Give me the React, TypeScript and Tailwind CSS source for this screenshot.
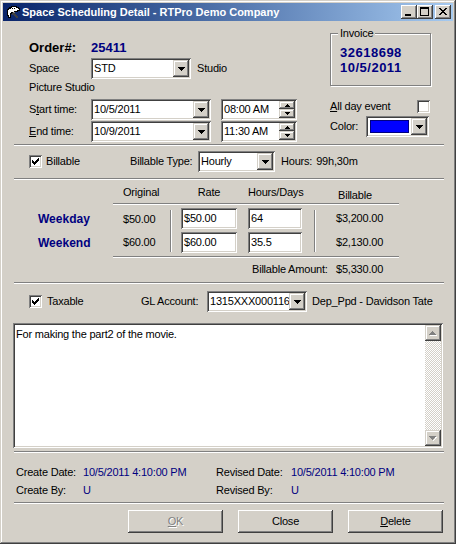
import React from 'react';

// classic win2k bevels
const sunken =
  'shadow-[inset_1px_1px_#808080,inset_-1px_-1px_#ffffff,inset_2px_2px_#404040,inset_-2px_-2px_#d4d0c8]';
const raised =
  'shadow-[inset_-1px_-1px_#404040,inset_1px_1px_#ffffff,inset_-2px_-2px_#808080,inset_2px_2px_#d4d0c8]';
const raisedSmall =
  'shadow-[inset_-1px_-1px_#404040,inset_1px_1px_#d4d0c8,inset_-2px_-2px_#808080,inset_2px_2px_#ffffff]';

const DownArrow = ({ color = '#000' }: { color?: string }) => (
  <svg width="7" height="4" viewBox="0 0 7 4" shapeRendering="crispEdges">
    <path d="M0 0h7v1H0zM1 1h5v1H1zM2 2h3v1H2zM3 3h1v1H3z" fill={color} />
  </svg>
);

const SmallArrow = ({ up }: { up?: boolean }) => (
  <svg width="5" height="3" viewBox="0 0 5 3" shapeRendering="crispEdges">
    <path d={up ? 'M2 0h1v1H2zM1 1h3v1H1zM0 2h5v1H0z' : 'M0 0h5v1H0zM1 1h3v1H1zM2 2h1v1H2z'} fill="#000" />
  </svg>
);

const DropButton = () => (
  <div className={`w-[16px] h-[17px] shrink-0 flex items-center justify-center bg-[#d4d0c8] ${raisedSmall}`}>
    <DownArrow />
  </div>
);

const Combo = ({ width, children }: { width: string; children: React.ReactNode }) => (
  <div className={`flex h-[21px] p-[2px] bg-white shrink-0 ${sunken} ${width}`}>
    <div className="flex-1 pl-[1px] leading-[17px] whitespace-nowrap overflow-hidden">{children}</div>
    <DropButton />
  </div>
);

const Spinner = ({ value }: { value: string }) => (
  <div className={`flex h-[21px] w-[76px] p-[2px] bg-white ${sunken}`}>
    <div className="flex-1 pl-[1px] leading-[17px] whitespace-nowrap">{value}</div>
    <div className="flex flex-col w-[16px]">
      <div className={`h-[8px] flex items-center justify-center bg-[#d4d0c8] ${raisedSmall}`}>
        <SmallArrow up />
      </div>
      <div className={`h-[9px] flex items-center justify-center bg-[#d4d0c8] ${raisedSmall}`}>
        <SmallArrow />
      </div>
    </div>
  </div>
);

const TextBox = ({ width, children }: { width: string; children: React.ReactNode }) => (
  <div className={`h-[21px] p-[2px] pl-[3px] bg-white leading-[17px] ${sunken} ${width}`}>{children}</div>
);

const Checkbox = ({ checked }: { checked?: boolean }) => (
  <div className={`w-[13px] h-[13px] shrink-0 bg-white flex items-center justify-center ${sunken}`}>
    {checked && (
      <svg width="7" height="7" viewBox="0 0 7 7" shapeRendering="crispEdges">
        <path
          d="M0 2h1v3H0zM1 3h1v3H1zM2 4h1v3H2zM3 3h1v3H3zM4 2h1v3H4zM5 1h1v3H5zM6 0h1v3H6z"
          fill="#000"
        />
      </svg>
    )}
  </div>
);

const HLine = ({ className }: { className: string }) => (
  <div className={`h-[2px] border-t border-t-[#808080] border-b border-b-white ${className}`} />
);

const VLine = () => <div className="w-[2px] border-l border-l-[#808080] border-r border-r-white" />;

const ScrollBtn = ({ up }: { up?: boolean }) => (
  <div className={`h-[16px] w-[16px] flex items-center justify-center bg-[#d4d0c8] ${raisedSmall}`}>
    <svg width="8" height="5" viewBox="0 0 8 5" shapeRendering="crispEdges">
      {up ? (
        <>
          <path d="M4 1h1v1H4zM5 2h1v1H5zM6 3h1v1H6zM1 4h7v1H1z" fill="#fff" />
          <path d="M3 0h1v1H3zM2 1h3v1H2zM1 2h5v1H1zM0 3h7v1H0z" fill="#808080" />
        </>
      ) : (
        <>
          <path d="M1 1h7v1H1zM6 2h1v1H6zM5 3h1v1H5zM4 4h1v1H4z" fill="#fff" />
          <path d="M0 0h7v1H0zM1 1h5v1H1zM2 2h3v1H2zM3 3h1v1H3z" fill="#808080" />
        </>
      )}
    </svg>
  </div>
);

const TitleButton = ({ kind }: { kind: 'min' | 'max' | 'close' }) => (
  <div className={`w-[16px] h-[14px] bg-[#d4d0c8] flex ${raised}`}>
    <svg width="16" height="14" viewBox="0 0 16 14" shapeRendering="crispEdges">
      {kind === 'min' && <path d="M4 9h6v2H4z" fill="#000" />}
      {kind === 'max' && <path d="M3 2h9v9H3zM4 4v6h7V4z" fill="#000" fillRule="evenodd" />}
      {kind === 'close' && (
        <path
          d="M4 3h2v1H4zM10 3h2v1h-2zM5 4h2v1H5zM9 4h2v1H9zM6 5h4v1H6zM7 6h2v1H7zM6 7h4v1H6zM5 8h2v1H5zM9 8h2v1H9zM4 9h2v1H4zM10 9h2v1h-2z"
          fill="#000"
        />
      )}
    </svg>
  </div>
);

const AppIcon = () => (
  <svg width="16" height="16" viewBox="0 0 16 16" shapeRendering="crispEdges">
    <path d="M2 5h1V4h1V3h2V2h5v1h2v1h1v2h-2v1H9v1H6v1H5v4H3v-2H2z" fill="#fff" stroke="#000" strokeWidth="1" />
    <path d="M5 4h1v1H5zM7 4h1v1H7zM9 4h1v1H9z" fill="#000" />
    <path d="M7 9h3v1h1v1h1v1h1v2h-2v-1h-1v-1H9v-1H7z" fill="#404040" />
    <path d="M8 8h2v1H8z" fill="#808080" />
  </svg>
);

export default function App() {
  return (
    <div
      className={`w-[456px] h-[544px] bg-[#d4d0c8] p-[3px] flex flex-col text-[11px] text-black tracking-[-0.2px] font-['Liberation_Sans',Arial,sans-serif] shadow-[inset_-1px_-1px_#404040,inset_1px_1px_#d4d0c8,inset_-2px_-2px_#808080,inset_2px_2px_#ffffff]`}
    >
      {/* title bar */}
      <div className="h-[18px] shrink-0 flex items-center pl-[2px] pr-[2px] bg-linear-to-r from-[#0a246a] to-[#a6caf0]">
        <AppIcon />
        <span className="ml-[1px] text-white font-bold text-[11px] tracking-normal whitespace-nowrap">
          Space Scheduling Detail - RTPro Demo Company
        </span>
        <div className="ml-auto flex">
          <TitleButton kind="min" />
          <TitleButton kind="max" />
          <div className="ml-[2px]">
            <TitleButton kind="close" />
          </div>
        </div>
      </div>

      {/* client */}
      <div className="flex-1 flex flex-col">
        <div className="flex">
          <div className="pl-[26px] pt-[19px] w-[327px] flex flex-col">
            <div className="flex h-[16px] items-center font-bold text-[13px] tracking-normal">
              <span className="w-[62px]">Order#:</span>
              <span className="text-[#000080]">25411</span>
            </div>
            <div className="flex items-center mt-[2px]">
              <span className="w-[62px]">Space</span>
              <Combo width="w-[100px]">STD</Combo>
              <span className="ml-[6px]">Studio</span>
            </div>
            <div className="h-[17px] flex items-center">Picture Studio</div>
            <div className="flex items-center mt-[3px]">
              <span className="w-[62px]">
                S<span className="underline">t</span>art time:
              </span>
              <Combo width="w-[120px]">10/5/2011</Combo>
              <div className="ml-[10px]">
                <Spinner value="08:00 AM" />
              </div>
            </div>
            <div className="flex items-center mt-[1px]">
              <span className="w-[62px]">
                <span className="underline">E</span>nd time:
              </span>
              <Combo width="w-[120px]">10/9/2011</Combo>
              <div className="ml-[10px]">
                <Spinner value="11:30 AM" />
              </div>
            </div>
          </div>

          <div className="pt-[12px] w-[101px] flex flex-col">
            <div className="relative h-[53px] border border-[#808080] shadow-[inset_1px_1px_#ffffff,1px_1px_#ffffff] pl-[9px] pt-[11px] font-bold text-[13px] text-[#000080] tracking-[0.5px] leading-[15px]">
              <span className="absolute -top-[8px] left-[7px] px-[2px] bg-[#d4d0c8] text-black font-normal text-[11px] tracking-[-0.2px] leading-[14px]">
                Invoice
              </span>
              <div>32618698</div>
              <div>10/5/2011</div>
            </div>
            <div className="mt-[14px] h-[13px] w-[100px] flex items-center justify-between">
              <span>
                <span className="underline">A</span>ll day event
              </span>
              <Checkbox />
            </div>
            <div className="mt-[3px] flex items-center">
              <span className="w-[36px]">Color:</span>
              <div className={`flex h-[21px] w-[63px] p-[2px] bg-white ${sunken}`}>
                <div className="flex-1 flex items-center pl-[2px] pr-[2px]">
                  <div className="h-[13px] w-full bg-[#0000ff] border border-[#000080]" />
                </div>
                <DropButton />
              </div>
            </div>
          </div>
        </div>

        <HLine className="ml-[11px] w-[430px] mt-[2px]" />

        {/* billable */}
        <div className="flex items-center h-[21px] mt-[5px] pl-[26px]">
          <div className="w-[101px] flex items-center">
            <Checkbox checked />
            <span className="ml-[4px]">Billable</span>
          </div>
          <span className="w-[68px]">Billable Type:</span>
          <Combo width="w-[77px]">Hourly</Combo>
          <span className="ml-[6px]">Hours:</span>
          <span className="ml-[4px]">99h,30m</span>
        </div>

        <HLine className="ml-[11px] w-[430px] mt-[6px]" />

        {/* rate table */}
        <div className="flex items-start h-[14px] ml-[35px] mt-[5px] leading-[14px]">
          <div className="w-[85px]" />
          <div className="w-[47px]">Original</div>
          <div className="w-[11px]" />
          <div className="w-[56px] text-center">Rate</div>
          <div className="w-[11px]" />
          <div className="w-[54px] text-center whitespace-nowrap">Hours/Days</div>
          <div className="w-[36px]" />
          <div className="mt-[3px]">Billable</div>
        </div>
        <HLine className="ml-[110px] w-[286px] mt-[4px]" />
        <div className="flex ml-[35px] mt-[3px]">
          <div className="w-[85px] flex flex-col gap-[3px] font-bold text-[12px] text-[#000080] tracking-normal">
            <div className="h-[21px] flex items-center">Weekday</div>
            <div className="h-[21px] flex items-center">Weekend</div>
          </div>
          <div className="w-[47px] flex flex-col gap-[3px]">
            <div className="h-[21px] flex items-center pt-[2px]">$50.00</div>
            <div className="h-[21px] flex items-center">$60.00</div>
          </div>
          <div className="w-[11px] flex pt-[2px] pb-[1px]">
            <VLine />
          </div>
          <div className="flex flex-col gap-[3px]">
            <TextBox width="w-[56px]">$50.00</TextBox>
            <TextBox width="w-[56px]">$60.00</TextBox>
          </div>
          <div className="w-[11px]" />
          <div className="flex flex-col gap-[3px]">
            <TextBox width="w-[54px]">64</TextBox>
            <TextBox width="w-[54px]">35.5</TextBox>
          </div>
          <div className="w-[34px] flex pl-[12px] pt-[2px] pb-[1px]">
            <VLine />
          </div>
          <div className="flex flex-col gap-[3px]">
            <div className="h-[21px] flex items-center">$3,200.00</div>
            <div className="h-[21px] flex items-center">$2,130.00</div>
          </div>
        </div>
        <HLine className="ml-[110px] w-[286px] mt-[3px]" />
        <div className="flex h-[14px] items-center ml-[249px] mt-[4px]">
          <span className="w-[84px]">Billable Amount:</span>
          <span>$5,330.00</span>
        </div>

        <HLine className="ml-[11px] w-[430px] mt-[6px]" />

        {/* taxable */}
        <div className="flex items-center h-[21px] mt-[7px] pl-[26px]">
          <div className="w-[112px] flex items-center">
            <Checkbox checked />
            <span className="ml-[5px]">Taxable</span>
          </div>
          <span className="w-[66px]">GL Account:</span>
          <Combo width="w-[100px]">1315XXX000116</Combo>
          <span className="ml-[5px] whitespace-nowrap">Dep_Ppd - Davidson Tate</span>
        </div>

        {/* notes */}
        <div className={`ml-[10px] mt-[11px] w-[430px] h-[125px] bg-white p-[2px] flex ${sunken}`}>
          <div className="flex-1 pl-[1px] pt-[2px] leading-[14px]">For making the part2 of the movie.</div>
          <div className="w-[16px] flex flex-col bg-[repeating-conic-gradient(#d4d0c8_0%_25%,#ffffff_0%_50%)] bg-[length:2px_2px]">
            <ScrollBtn up />
            <div className="flex-1" />
            <ScrollBtn />
          </div>
        </div>

        <HLine className="ml-[11px] w-[430px] mt-[3px]" />

        {/* audit */}
        <div className="flex h-[14px] items-center ml-[13px] mt-[12px] whitespace-nowrap">
          <span className="w-[67px]">Create Date:</span>
          <span className="w-[133px] text-[#000080]">10/5/2011 4:10:00 PM</span>
          <span className="w-[75px]">Revised Date:</span>
          <span className="text-[#000080]">10/5/2011 4:10:00 PM</span>
        </div>
        <div className="flex h-[14px] items-center ml-[13px] mt-[4px] whitespace-nowrap">
          <span className="w-[67px]">Create By:</span>
          <span className="w-[133px] text-[#000080]">U</span>
          <span className="w-[75px]">Revised By:</span>
          <span className="text-[#000080]">U</span>
        </div>

        <HLine className="ml-[11px] w-[430px] mt-[5px]" />

        <div className="flex gap-[15px] ml-[125px] mt-[6px]">
          <div className={`w-[95px] h-[23px] flex items-center justify-center bg-[#d4d0c8] text-[#808080] [text-shadow:1px_1px_#ffffff] ${raised}`}>
            <span>
              <span className="underline">O</span>K
            </span>
          </div>
          <div className={`w-[95px] h-[23px] flex items-center justify-center bg-[#d4d0c8] ${raised}`}>Close</div>
          <div className={`w-[95px] h-[23px] flex items-center justify-center bg-[#d4d0c8] ${raised}`}>
            <span>
              <span className="underline">D</span>elete
            </span>
          </div>
        </div>
      </div>
    </div>
  );
}
